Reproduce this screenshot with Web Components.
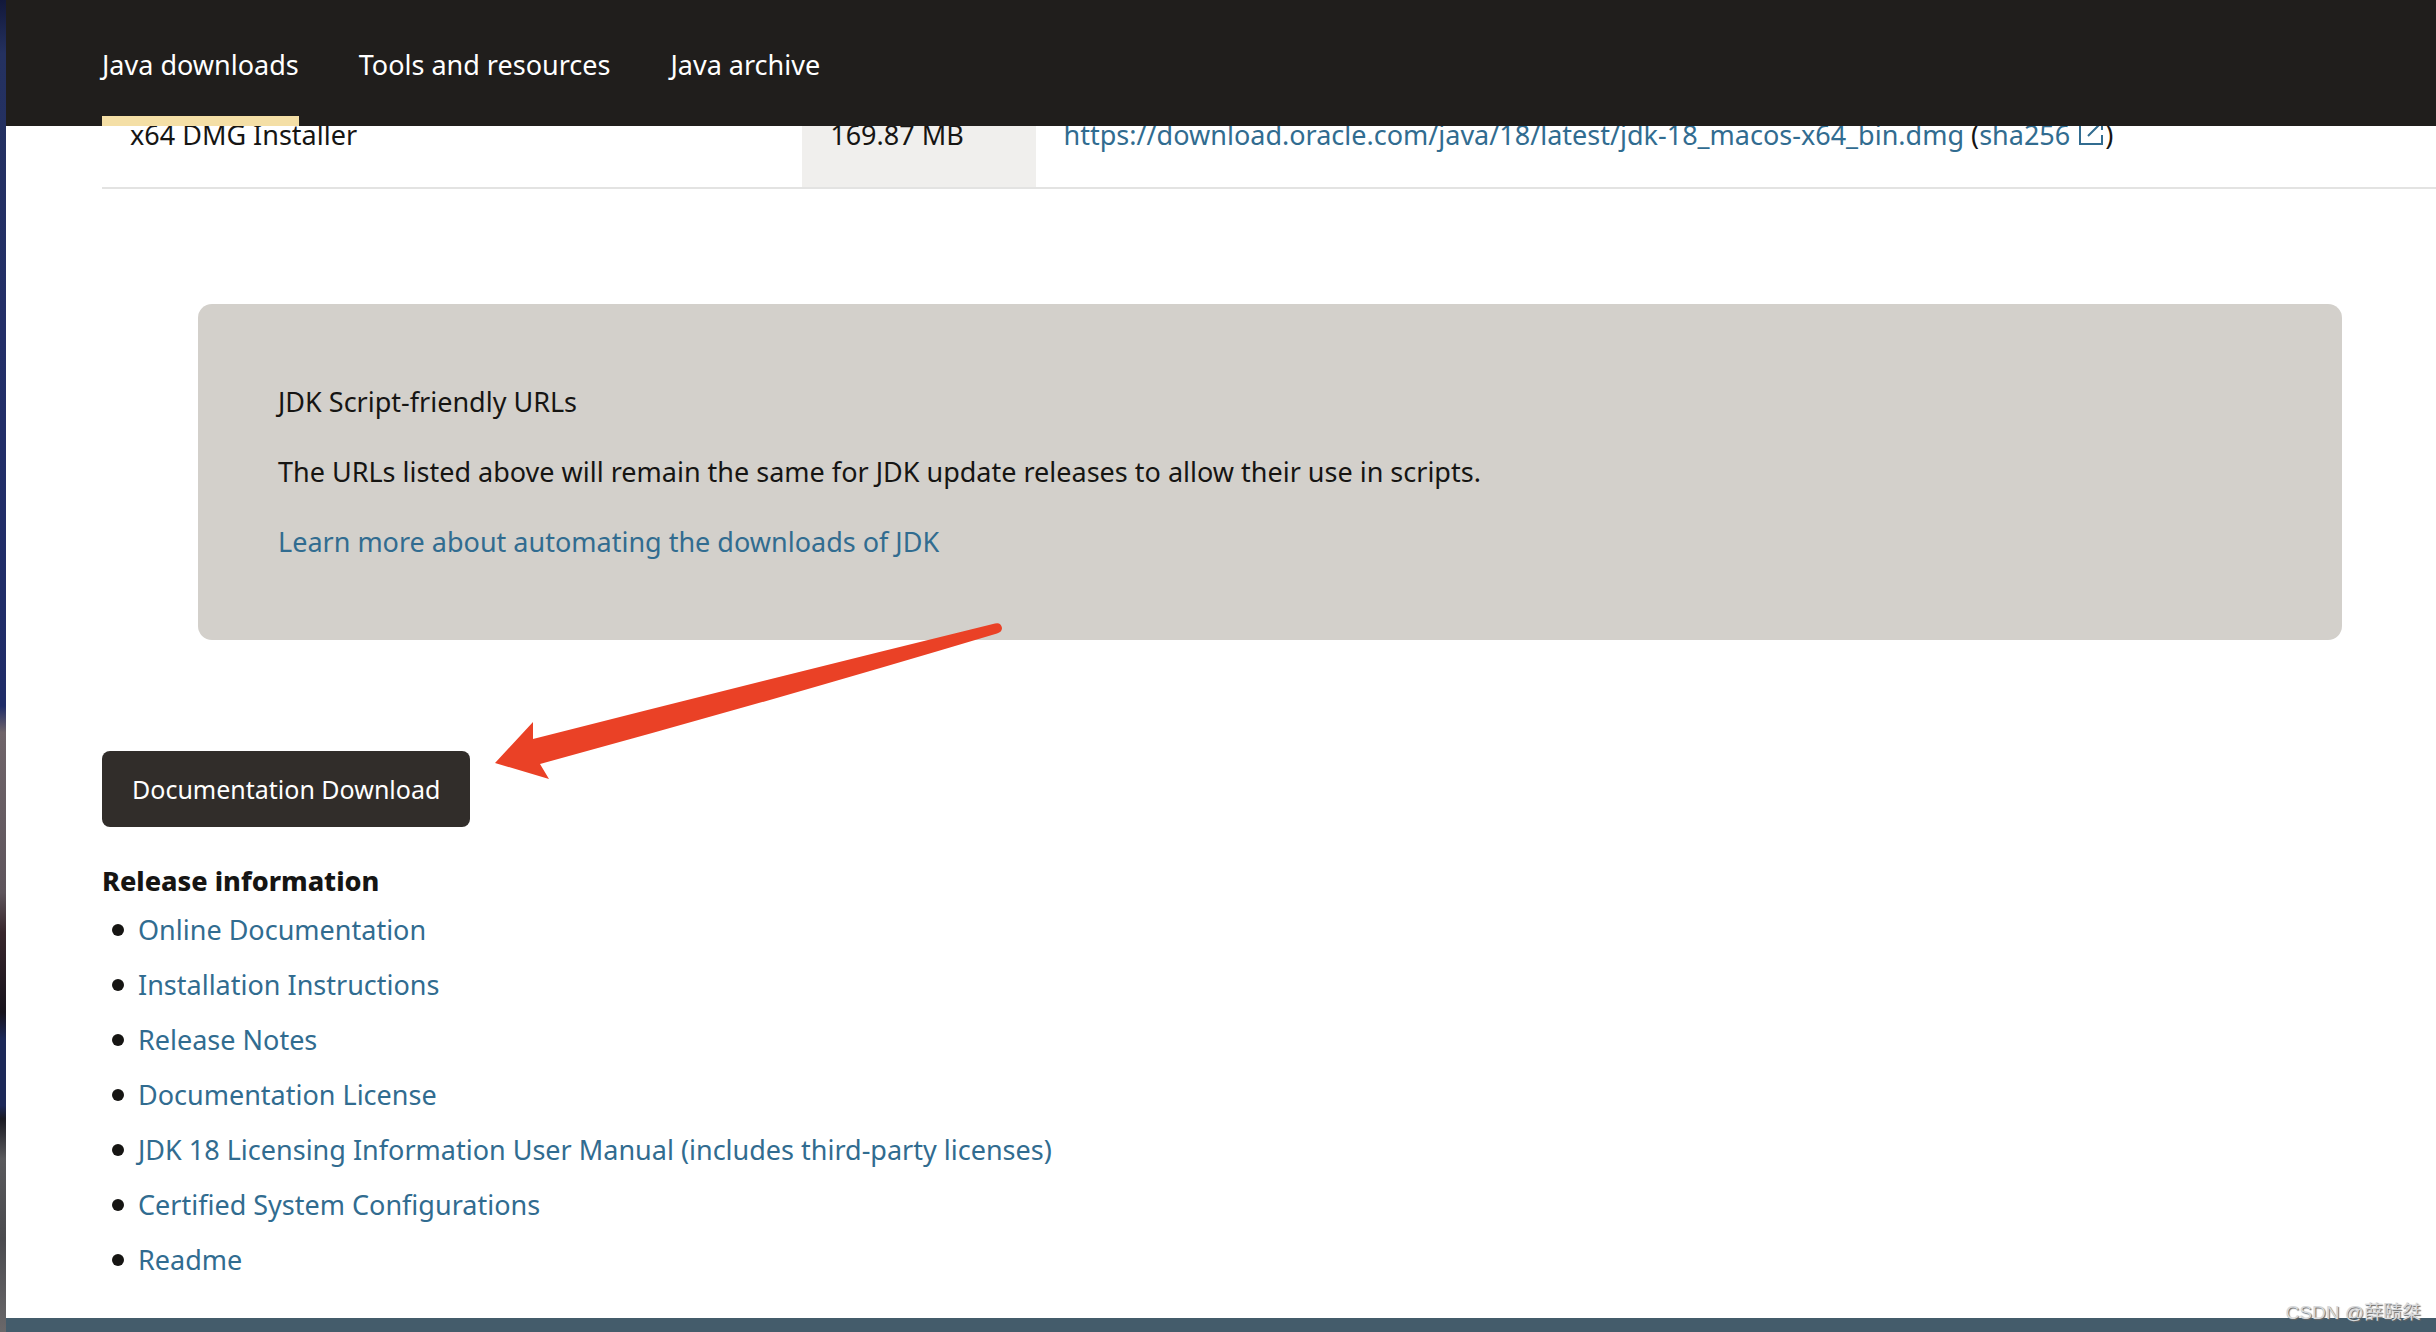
<!DOCTYPE html>
<html lang="en">
<head>
<meta charset="utf-8">
<title>Java Downloads</title>
<style>
  body {
    margin: 0;
    background: #fff;
    color: #161513;
    font: 27px/42px "Noto Sans", "Open Sans", sans-serif;
    --link: #316c90;
    --gutter: 96px;
  }
</style>
</head>
<body>
<java-page>
  <site-tabs slot="header">
    <site-tab current>Java downloads</site-tab>
    <site-tab>Tools and resources</site-tab>
    <site-tab>Java archive</site-tab>
  </site-tabs>
  <download-table></download-table>
  <note-panel>
    <p>JDK Script-friendly URLs</p>
    <p>The URLs listed above will remain the same for JDK update releases to allow their use in scripts.</p>
    <p><text-link>Learn more about automating the downloads of JDK</text-link></p>
  </note-panel>
  <doc-button>Documentation Download</doc-button>
  <release-info></release-info>
  <pointer-arrow slot="overlay"></pointer-arrow>
  <water-mark slot="overlay">CSDN @薛赜桀</water-mark>
</java-page>

<script>
  const define = (name, html) => {
    const template = document.createElement('template');
    template.innerHTML = html.trim();
    customElements.define(name, class extends HTMLElement {
      constructor() {
        super();
        this.attachShadow({ mode: 'open' }).append(template.content.cloneNode(true));
      }
    });
  };

  define('java-page', `
    <style>
      :host { display: flex; position: relative; min-height: 100vh; overflow: hidden; }
      .desktop {
        flex: 0 0 6px;
        background: linear-gradient(#12183a 0, #24315f 4%, #232f68 25%, #1f2c68 53%,
          #6f6469 55%, #5e555c 67%, #38262c 70%, #17131c 76%, #1c2858 78%, #1c2858 83%,
          #1a1a22 84%, #59595c 87%, #4a4a4e 93%, #6a686a 100%);
      }
      .window { flex: 1; min-width: 0; display: flex; flex-direction: column; }
      main { display: flex; flex-direction: column; align-items: flex-start; padding-left: var(--gutter); padding-bottom: 37px; }
      footer { flex: 1; min-height: 12px; background: #445c6b; }
    </style>
    <div class="desktop"></div>
    <div class="window">
      <slot name="header"></slot>
      <main><slot></slot></main>
      <footer></footer>
    </div>
    <slot name="overlay"></slot>`);

  define('site-tabs', `
    <style>
      :host { display: block; position: sticky; top: 0; z-index: 1; background: #201e1c; }
      nav { display: flex; gap: 60px; padding-left: var(--gutter); }
    </style>
    <nav><slot></slot></nav>`);

  define('site-tab', `
    <style>
      :host { display: block; }
      a { display: block; padding: 44px 0 30px; border-bottom: 10px solid transparent; color: #fff; text-decoration: none; }
      :host([current]) a { border-color: #f4dfa6; }
    </style>
    <a href="#"><slot></slot></a>`);

  define('text-link', `<style>
      :host { display: inline; }
      a { color: var(--link); text-decoration: none; }
    </style><a href="#"><slot></slot></a>`);

  define('download-table', `
    <style>
      :host { display: block; align-self: stretch; margin-top: -42px; }
      table { width: 100%; border-collapse: collapse; table-layout: fixed; }
      td { box-sizing: border-box; padding: 30px 28px 31px; border-bottom: 2px solid #e3e3e2; }
      .product { width: 30%; }
      .size { width: 10%; background: #f0efed; }
      svg { width: 24px; height: 24px; margin: 0 2px; color: var(--link); }
    </style>
    <table>
      <tr>
        <td class="product">x64 DMG Installer</td>
        <td class="size">169.87 MB</td>
        <td><text-link>https://download.oracle.com/java/18/latest/jdk-18_macos-x64_bin.dmg</text-link>
          (<text-link>sha256
          <svg viewBox="0 0 24 24" fill="none" stroke="currentColor" stroke-width="2"><path d="M9 2H1v21h22v-9M9 15 22 2M15 1h8v8"/></svg></text-link>)</td>
      </tr>
    </table>`);

  define('note-panel', `
    <style>
      :host {
        display: flex; flex-direction: column; gap: 28px; align-self: stretch;
        margin: 115px 94px 111px var(--gutter); padding: 77px 80px;
        border-radius: 14px; background: #d3d0cb;
      }
      ::slotted(p) { margin: 0; }
    </style>
    <slot></slot>`);

  define('doc-button', `
    <style>
      :host { display: block; }
      button { display: block; padding: 17px 30px; border: 0; border-radius: 8px; background: #312d2a; color: #fff; font: inherit; font-size: 25px; cursor: pointer; }
    </style>
    <button type="button"><slot></slot></button>`);

  define('release-info', `
    <style>
      :host { display: block; margin-top: 33px; }
      h2 { margin: 0 0 7px; font-size: inherit; font-weight: 800; }
      ul { display: flex; flex-direction: column; gap: 13px; margin: 0; padding: 0 0 0 10px; list-style: none; }
      li { display: flex; align-items: center; gap: 14px; }
      li::before { content: ""; width: 12px; height: 12px; border-radius: 50%; background: #161513; }
    </style>
    <h2>Release information</h2>
    <ul>
      <li><text-link>Online Documentation</text-link></li>
      <li><text-link>Installation Instructions</text-link></li>
      <li><text-link>Release Notes</text-link></li>
      <li><text-link>Documentation License</text-link></li>
      <li><text-link>JDK 18 Licensing Information User Manual (includes third-party licenses)</text-link></li>
      <li><text-link>Certified System Configurations</text-link></li>
      <li><text-link>Readme</text-link></li>
    </ul>`);

  define('pointer-arrow', `
    <style>
      :host { position: absolute; left: 495px; top: 622px; z-index: 2; pointer-events: none; }
      svg { display: block; width: 508px; height: 158px; }
    </style>
    <svg viewBox="0 0 508 158" fill="#ea4126"><path d="M0 141 38 100V117Q270 58 500 1.500Q506 0 507 6Q507 10 502 11.500Q280 78 45 142L54 157Z"/></svg>`);

  define('water-mark', `
    <style>
      :host {
        position: absolute; right: 15px; bottom: 4px; z-index: 2;
        font: 19px/30px "Liberation Sans", "Noto Sans CJK SC", sans-serif;
        color: #d6d8da; text-shadow: 1px 1px 1px #666;
      }
    </style>
    <slot></slot>`);
</script>
</body>
</html>
